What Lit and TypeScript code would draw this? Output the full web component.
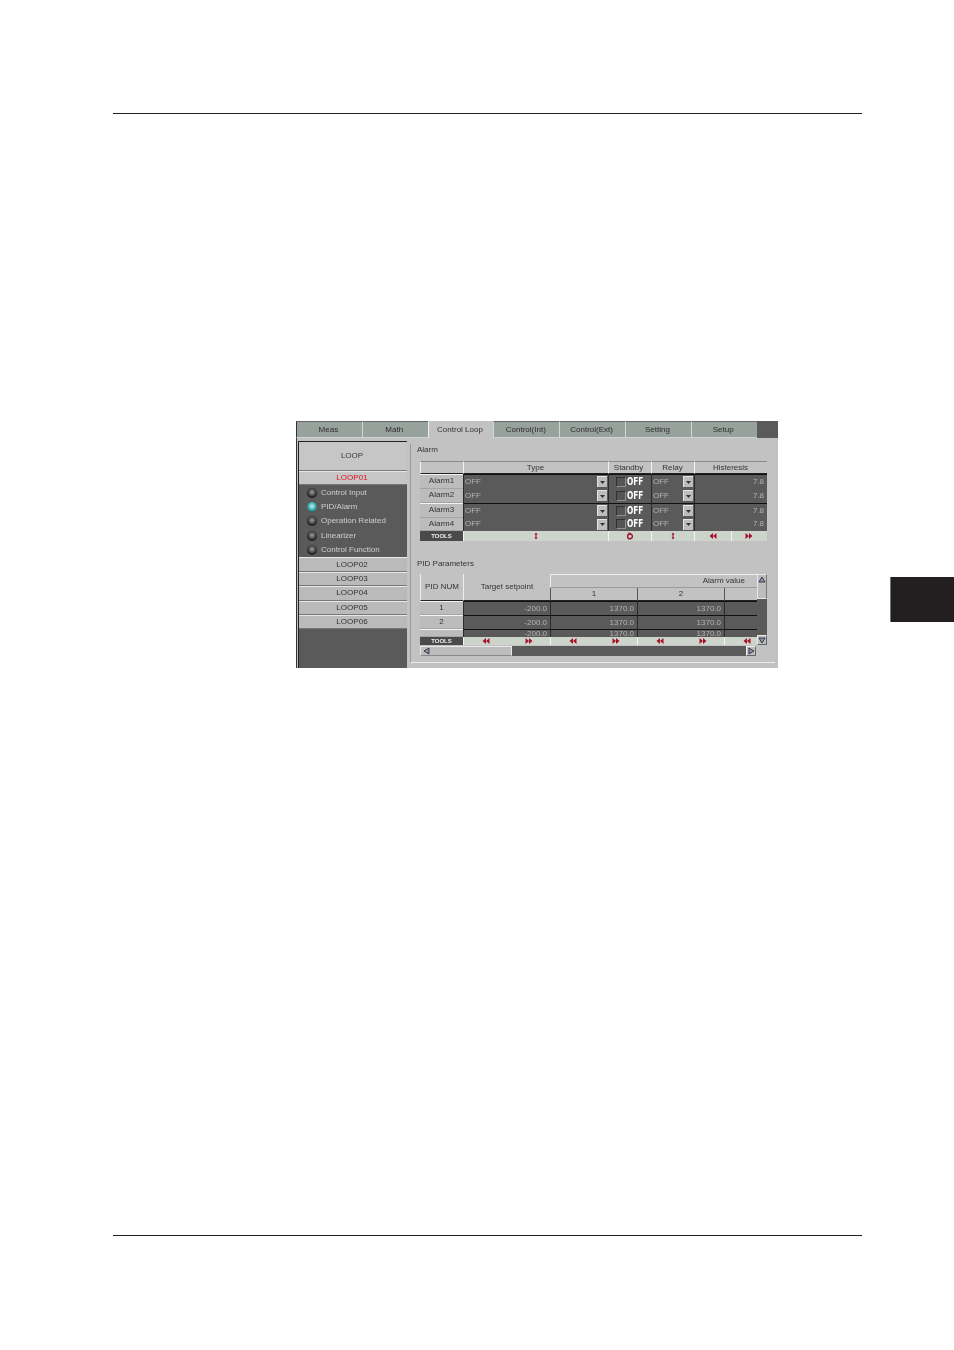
import { LitElement, html, css, svg } from "lit";
import { customElement } from "lit/decorators.js";

const RED = "#a3142a";
const icon = (body: unknown, w = 8, h = 8) =>
  html`<svg class="ico" width=${w} height=${h} viewBox="0 0 8 8">${body}</svg>`;
const dblLeft = () => icon(svg`<path fill=${RED} d="M4 1v6L0.5 4zM7.5 1v6L4 4z"/>`);
const dblRight = () => icon(svg`<path fill=${RED} d="M4 1v6l3.5-3zM0.5 1v6L4 4z"/>`);
const updown = () => icon(svg`<path fill=${RED} d="M2.5 2.5 4 0.5l1.5 2H4.7v1.2H3.3V2.5zM2.5 5.5 4 7.5l1.5-2H4.7V4.3H3.3v1.2z"/>`);
const rotate = () => icon(svg`<path fill="none" stroke=${RED} stroke-width="1.4" d="M1.6 4.4a2.4 2.4 0 1 0 4.8 0 2.4 2.4 0 1 0-4.8 0"/><path fill=${RED} d="M2.5 0.2 5.5 1.6 2.5 3z"/>`);
const triUp = () => html`<svg class="ico" width="8" height="7" viewBox="0 0 8 7"><path d="M4 1 7 6H1z" fill="#8b93b8" stroke="#222" stroke-width=".8"/></svg>`;
const triDown = () => html`<svg class="ico" width="8" height="7" viewBox="0 0 8 7"><path d="M4 6 7 1H1z" fill="#8b93b8" stroke="#222" stroke-width=".8"/></svg>`;
const triLeft = () => html`<svg class="ico" width="7" height="8" viewBox="0 0 7 8"><path d="M1 4 6 1v6z" fill="#8b93b8" stroke="#222" stroke-width=".8"/></svg>`;
const triRight = () => html`<svg class="ico" width="7" height="8" viewBox="0 0 7 8"><path d="M6 4 1 1v6z" fill="#8b93b8" stroke="#222" stroke-width=".8"/></svg>`;
const dropArrow = () => html`<svg class="ico" width="5" height="3" viewBox="0 0 5 3"><path d="M0 0h5L2.5 3z" fill="#333"/></svg>`;

const TABS = ["Meas", "Math", "Control Loop", "Control(Int)", "Control(Ext)", "Setting", "Setup"];
const MENU = ["Control Input", "PID/Alarm", "Operation Related", "Linearizer", "Control Function"];
const LOOPS = ["LOOP02", "LOOP03", "LOOP04", "LOOP05", "LOOP06"];
const ALARMS = ["Alarm1", "Alarm2", "Alarm3", "Alarm4"];

@customElement("app-root")
export class AppRoot extends LitElement {
  static styles = css`
    :host { display: block; width: 954px; height: 1350px; background: #fff; overflow: hidden; }
    .page { display: flex; flex-direction: column; padding-top: 113px; }
    .rule { width: 749px; height: 1px; margin-left: 113px; background: #231f20; }
    .mid { height: 1121px; display: flex; align-items: flex-start; }
    .shot-wrap { margin: 307px 0 0 296px; }
    .side-tab { width: 64px; height: 45px; margin: 463px 0 0 112px; box-sizing: border-box; background: #231f20; border-left: 1px solid #77777a; }

    .shot { width: 482px; height: 247px; display: flex; flex-direction: column; background: #c2c2c2;
      font: 8px/1 "Liberation Sans", Arial, sans-serif; color: #3a3a3a; filter: blur(0.3px); overflow: hidden; }
    .ico { display: block; }

    .tabs { display: flex; height: 17px; background: #5a5a5a; }
    .tab { width: 65.8px; box-sizing: border-box; display: flex; align-items: center; justify-content: center;
      background: #98a29d; border-top: 1px solid #666; border-left: 1px solid #d2d8d4; border-bottom: 1px solid #cdd3cf; color: #2c2c2c; padding: 1px 2px 0 0; }
    .tab:first-child { border-left-color: #333; }
    .tab.active { background: #c2c2c2; border-color: #c2c2c2; border-left-color: #eee; color: #333; }
    .tabs-end { flex: 1; }

    .body { flex: 1; display: flex; min-height: 0; border-left: 1px solid #333; }
    .left { margin: 3px 0 0 1px; width: 109px; flex: none; box-sizing: border-box; background: #5a5a5a; border-top: 1px solid #222; border-left: 1px solid #222; display: flex; flex-direction: column; }
    .loop-head { height: 28px; flex: none; background: #c6c6c6; display: flex; align-items: center; justify-content: center; border-bottom: 1px solid #7a7a7a; padding-right: 2px; }
    .loop { height: 14.4px; flex: none; box-sizing: border-box; background: #bababa; display: flex; align-items: center; justify-content: center; border-top: 1px solid #e8e8e8; border-bottom: 1px solid #777; color: #333; letter-spacing: .1px; padding-right: 2px; }
    .loop.on { background: #c6c6c6; color: #e0141e; }
    .menu { display: flex; flex-direction: column; }
    .menu-row { height: 14.4px; display: flex; align-items: center; gap: 4px; padding-left: 8px; color: #cfcfcf; }
    .led { width: 10px; height: 10px; border-radius: 50%; flex: none; background: radial-gradient(circle at 50% 42%, #a0a0a0 0, #5a5a5a 35%, #141414 72%, #2a2a2a 100%); }
    .led.on { background: radial-gradient(circle at 50% 42%, #c9f2f2 0, #46b4b4 45%, #1c4c50 85%); }

    .right { flex: 1; padding: 6px 0 0 3px; display: flex; flex-direction: column; min-width: 0; }
    .group { border-left: 1px solid #9a9a9a; padding-left: 6px; box-sizing: border-box; }
    .group.a { height: 109px; }
    .group.b { height: 110px; border-bottom: 1px solid #ececec; margin-right: 3px; }
    .g-label { height: 11px; display: flex; align-items: center; color: #333; }
    .group.a .g-label { margin-bottom: 6px; }
    .group.b .g-label { margin: 5px 0 5px; }

    .t-a { margin-left: 3px; width: 347px; display: grid; grid-template-columns: 43px 145px 43px 43px 36.5px 36.5px; grid-template-rows: 13px 14.5px 14.5px 14.5px 13.5px 10px; }
    .h { background: #c2c2c2; display: flex; align-items: center; justify-content: center; border-top: 1px solid #8a8a8a; border-left: 1px solid #f0f0f0; border-bottom: 1px solid #222; color: #333; box-sizing: border-box; padding-right: 1px; }
    .h.narrow { padding-right: 3px; }
    .lbl { background: #bcbcbc; display: flex; align-items: center; justify-content: center; box-sizing: border-box; color: #333; border-bottom: 1px solid #a4a4a4; }
    .lbl.w { border-top: 1px solid #f4f4f4; }
    .d { background: #5a5a5a; color: #b4b4b4; display: flex; align-items: center; box-sizing: border-box; padding-left: 1px; border-left: 1px solid #2a2a2a; }
    .d.k { border-top: 1px solid #111; }
    .d.num { justify-content: flex-end; padding: 0 3px 0 0; }
    .d.sb { justify-content: space-between; padding-right: 1px; }
    .d.std { padding-left: 7px; gap: 1px; }
    .span2 { grid-column: span 2; }
    .drop { width: 10px; height: 11px; background: #bdbdbd; display: flex; align-items: center; justify-content: center; border-top: 1px solid #e4e4e4; border-left: 1px solid #e4e4e4; box-sizing: border-box; }
    .chk { width: 10px; height: 10px; flex: none; box-sizing: border-box; border: 1px solid #303030; border-bottom-color: #909090; border-right-color: #909090; background: #555; }
    .off { font: bold 10px/1 "DejaVu Sans", sans-serif; color: #fff; display: inline-block; transform: scaleX(.74); transform-origin: left center; }
    .tools { background: #4a4a4a; color: #eee; font: bold 6px/1 "Liberation Sans", sans-serif; display: flex; align-items: center; justify-content: center; }
    .tc { background: #cdd4cc; display: flex; align-items: center; justify-content: center; border-left: 1px solid #f4f4f4; box-sizing: border-box; }
    .tc.pair { justify-content: space-around; }
    .tc.end { justify-content: flex-end; padding-right: 6px; }

    .t-b { margin-left: 3px; width: 347px; display: flex; flex-direction: column; }
    .t-b-top { display: flex; height: 71px; }
    .t-b-grid { width: 337px; display: grid; grid-template-columns: 43px 87px 87px 87px 33px; grid-template-rows: 14px 13px 14px 14px 8px 8px; overflow: hidden; }
    .ph { grid-row: span 2; background: #c2c2c2; display: flex; align-items: center; justify-content: center; border-left: 1px solid #eee; border-bottom: 1px solid #222; box-sizing: border-box; color: #333; }
    .ph.top { grid-row: auto; grid-column: span 3; justify-content: flex-end; padding-right: 12px; border-top: 1px solid #eee; border-bottom: 1px solid #9a9a9a; }
    .ph.sub { grid-row: auto; border-left: 1px solid #555; }
    .clip { align-items: flex-start; padding-top: 6px; overflow: hidden; }
    .vs { width: 10px; display: flex; flex-direction: column; background: #5a5a5a; }
    .vthumb { height: 25px; background: #bdbdbd; display: flex; justify-content: center; padding-top: 1px; box-sizing: border-box; border: 1px solid #e8e8e8; border-right-color: #777; }
    .vtrack { flex: 1; }
    .vbtn { height: 10px; background: #bdbdbd; display: flex; align-items: center; justify-content: center; border: 1px solid #e8e8e8; border-right-color: #666; border-bottom-color: #666; box-sizing: border-box; }
    .hs { display: flex; height: 10px; width: 336px; margin-top: 1px; background: #5a5a5a; }
    .hthumb { width: 92px; box-sizing: border-box; background: #bdbdbd; border: 1px solid #e8e8e8; border-bottom-color: #888; display: flex; align-items: center; padding-left: 2px; }
    .htrack { flex: 1; }
    .hbtn { width: 10px; background: #bdbdbd; display: flex; align-items: center; justify-content: center; border: 1px solid #ededed; border-right-color: #666; border-bottom-color: #666; box-sizing: border-box; }
  `;

  render() {
    return html`<div class="page">
      <div class="rule"></div>
      <div class="mid">
        <div class="shot-wrap">${this.shot()}</div>
        <div class="side-tab"></div>
      </div>
      <div class="rule"></div>
    </div>`;
  }

  shot() {
    return html`<div class="shot">
      <div class="tabs">
        ${TABS.map((t, i) => html`<div class="tab ${i === 2 ? "active" : ""}">${t}</div>`)}
        <div class="tabs-end"></div>
      </div>
      <div class="body">
        <div class="left">
          <div class="loop-head">LOOP</div>
          <div class="loop on">LOOP01</div>
          <div class="menu">
            ${MENU.map((m, i) => html`<div class="menu-row"><span class="led ${i === 1 ? "on" : ""}"></span>${m}</div>`)}
          </div>
          ${LOOPS.map((l) => html`<div class="loop">${l}</div>`)}
        </div>
        <div class="right">
          <div class="group a">
            <div class="g-label">Alarm</div>
            ${this.alarmTable()}
          </div>
          <div class="group b">
            <div class="g-label">PID Parameters</div>
            ${this.pidTable()}
          </div>
        </div>
      </div>
    </div>`;
  }

  alarmTable() {
    return html`<div class="t-a">
      <div class="h"></div><div class="h">Type</div><div class="h narrow">Standby</div><div class="h">Relay</div><div class="h span2">Histeresis</div>
      ${ALARMS.map((a, i) => {
        const k = i % 2 === 0 ? "k" : "";
        return html`
          <div class="lbl ${k ? "w" : ""}">${a}</div>
          <div class="d sb ${k}">OFF<span class="drop">${dropArrow()}</span></div>
          <div class="d std ${k}"><span class="chk"></span><span class="off">OFF</span></div>
          <div class="d sb ${k}">OFF<span class="drop">${dropArrow()}</span></div>
          <div class="d num span2 ${k}">7.8</div>`;
      })}
      <div class="tools">TOOLS</div>
      <div class="tc">${updown()}</div><div class="tc">${rotate()}</div><div class="tc">${updown()}</div>
      <div class="tc">${dblLeft()}</div><div class="tc">${dblRight()}</div>
    </div>`;
  }

  pidTable() {
    const row = (n: string, clip = false) => html`
      <div class="lbl w ${clip ? "clip" : ""}">${n}</div>
      <div class="d num k ${clip ? "clip" : ""}">-200.0</div>
      <div class="d num k ${clip ? "clip" : ""}">1370.0</div>
      <div class="d num k ${clip ? "clip" : ""}">1370.0</div>
      <div class="d k"></div>`;
    const pair = () => html`<div class="tc pair">${dblLeft()}${dblRight()}</div>`;
    return html`<div class="t-b">
      <div class="t-b-top">
        <div class="t-b-grid">
          <div class="ph">PID NUM</div>
          <div class="ph">Target setpoint</div>
          <div class="ph top">Alarm value</div>
          <div class="ph sub">1</div><div class="ph sub">2</div><div class="ph sub"></div>
          ${row("1")}${row("2")}${row("3", true)}
          <div class="tools">TOOLS</div>
          ${pair()}${pair()}${pair()}
          <div class="tc end">${dblLeft()}</div>
        </div>
        <div class="vs">
          <div class="vthumb">${triUp()}</div>
          <div class="vtrack"></div>
          <div class="vbtn">${triDown()}</div>
        </div>
      </div>
      <div class="hs">
        <div class="hthumb">${triLeft()}</div>
        <div class="htrack"></div>
        <div class="hbtn">${triRight()}</div>
      </div>
    </div>`;
  }
}
